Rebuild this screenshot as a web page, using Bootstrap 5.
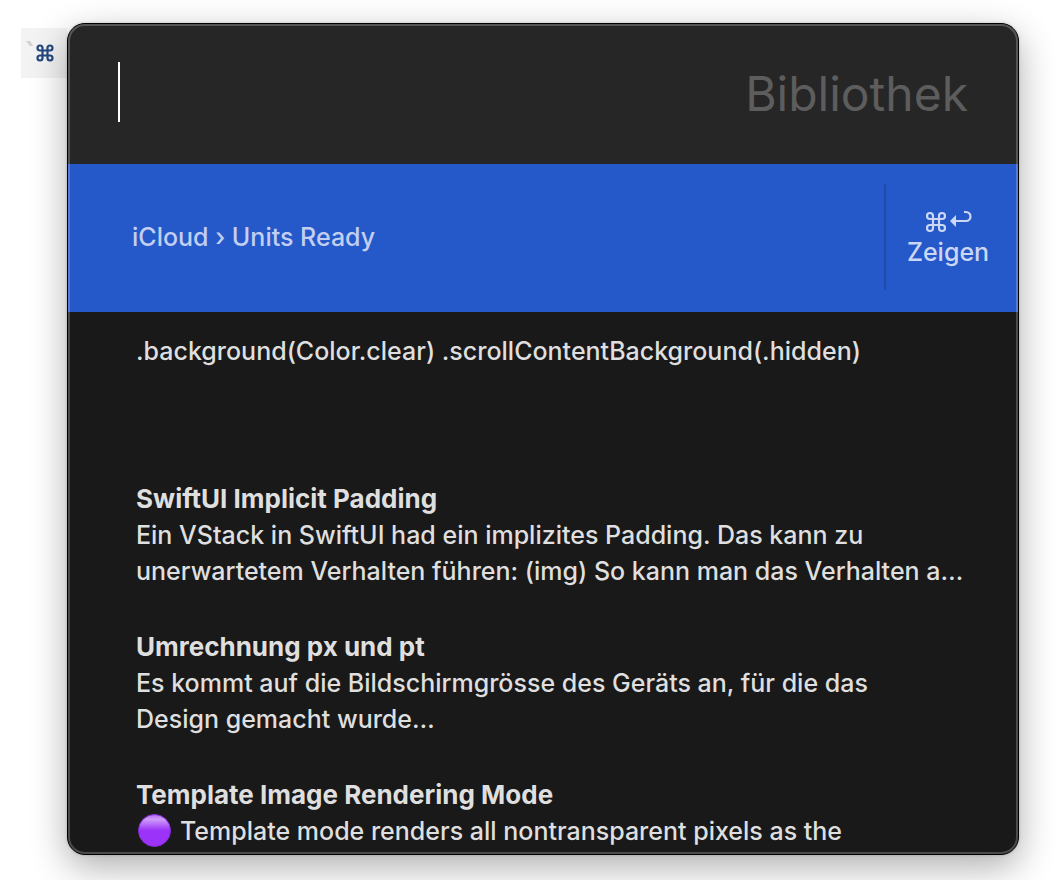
<!DOCTYPE html>
<html lang="de">
<head>
<meta charset="utf-8">
<meta name="viewport" content="width=device-width, initial-scale=1">
<title>Bibliothek</title>
<link href="https://cdn.jsdelivr.net/npm/bootstrap@5.3.0/dist/css/bootstrap.min.css" rel="stylesheet">
<style>
body { background: #fff; font-family: Inter, sans-serif; font-size: 25px; font-weight: 500; line-height: 36px; overflow: hidden; }
.desktop { height: 100vh; padding: 23px 39px 25px 21px; }
.key-tag { width: 46px; height: 50px; margin-top: 5px; background: #f3f3f3; }
.panel { min-width: 0; background: #191919; border: 1px solid #000; border-radius: 18px; color: #dfdfdf;
  box-shadow: 0 12px 36px rgba(0,0,0,.32), 0 0 3px rgba(0,0,0,.2); }
.panel::after { content: ""; position: absolute; inset: 0; border: 2px solid rgba(255,255,255,.22); border-radius: 17px; pointer-events: none; }
.panel-clip { border-radius: 17px; }
.search { height: 140px; background: #262626; padding: 0 50px; }
.search input { min-width: 0; color: #fff; font-size: 48px; line-height: 60px; outline: 0; }
.search label { color: #5d5d5d; font-size: 48px; font-weight: 400; line-height: 60px; }
.caret { left: 50px; top: 38px; width: 2px; height: 60px; background: #fff; }
.entry { height: 148px; padding: 21px 68px 19px; white-space: nowrap; }
.entry h2 { font-size: 26px; line-height: inherit; font-weight: 700; }
.entry-active { background: #2558c9; color: #c2cff0; padding: 20px 0 22px 64px; }
.show-btn { width: 134px; height: 106px; padding: 0 8px 0 0; border-left: 2px solid #204bab; color: #cbd7f3; font-weight: 500; line-height: 30px; }
</style>
</head>
<body>
<div class="desktop d-flex">
  <div class="key-tag flex-shrink-0">
    <svg class="d-block" width="46" height="50" viewBox="0 0 46 50" aria-hidden="true">
      <path d="M5 13h4l3 5H9z" fill="#d0d0d0"/>
      <path d="M21.500 22.500h5v5h-5zM21.500 22.500h-2.500a2.500 2.500 0 1 1 2.500-2.500zM26.500 22.500v-2.500a2.500 2.500 0 1 1 2.500 2.500zM26.500 27.500h2.500a2.500 2.500 0 1 1-2.500 2.500zM21.500 27.500v2.500a2.500 2.500 0 1 1-2.500-2.500z" fill="none" stroke="#24477f" stroke-width="2.200"/>
    </svg>
  </div>
  <main class="panel position-relative flex-grow-1">
    <div class="panel-clip h-100 overflow-hidden">
      <div class="search d-flex align-items-center position-relative">
        <input id="query" type="text" class="flex-fill border-0 bg-transparent p-0" autocomplete="off">
        <label for="query">Bibliothek</label>
        <span class="caret position-absolute"></span>
      </div>
      <div class="entry entry-active d-flex align-items-start justify-content-between">
        <span class="align-self-center">iCloud › Units Ready</span>
        <button type="button" class="show-btn bg-transparent border-end-0 border-top-0 border-bottom-0 d-flex flex-column align-items-center justify-content-center">
          <svg width="48" height="30" viewBox="0 0 48 30" fill="none" stroke="currentColor" stroke-width="2.200" aria-hidden="true">
            <path d="M9 12h6v6H9zM9 12H6a3 3 0 1 1 3-3zM15 12v-3a3 3 0 1 1 3 3zM15 18h3a3 3 0 1 1-3 3zM9 18v3a3 3 0 1 1-3-3z"/>
            <path d="M30 14h12a4.500 4.500 0 0 0 0-9h-2"/>
            <path d="M26 14l6-6v12z" fill="currentColor" stroke="none"/>
          </svg>
          <span>Zeigen</span>
        </button>
      </div>
      <article class="entry">.background(Color.clear) .scrollContentBackground(.hidden)</article>
      <article class="entry">
        <h2 class="m-0">SwiftUI Implicit Padding</h2>
        <p class="m-0">Ein VStack in SwiftUI had ein implizites Padding. Das kann zu<br>unerwartetem Verhalten führen: (img) So kann man das Verhalten a…</p>
      </article>
      <article class="entry">
        <h2 class="m-0">Umrechnung px und pt</h2>
        <p class="m-0">Es kommt auf die Bildschirmgrösse des Geräts an, für die das<br>Design gemacht wurde…</p>
      </article>
      <article class="entry">
        <h2 class="m-0">Template Image Rendering Mode</h2>
        <p class="m-0 d-flex align-items-center">
          <svg class="me-2 flex-shrink-0" width="36" height="36" viewBox="0 0 36 36" aria-hidden="true">
            <defs><linearGradient id="gloss" x1="0" y1="0" x2="0" y2="1"><stop offset="0" stop-color="#b266e8"/><stop offset=".15" stop-color="#cf9cf8"/><stop offset=".5" stop-color="#9c33f8"/></linearGradient></defs>
            <circle cx="18.500" cy="17.500" r="16" fill="url(#gloss)" stroke="#8a2ae0" stroke-width="1"/>
          </svg>
          <span>Template mode renders all nontransparent pixels as the</span>
        </p>
      </article>
    </div>
  </main>
</div>
<script src="https://cdn.jsdelivr.net/npm/bootstrap@5.3.0/dist/js/bootstrap.bundle.min.js"></script>
</body>
</html>
